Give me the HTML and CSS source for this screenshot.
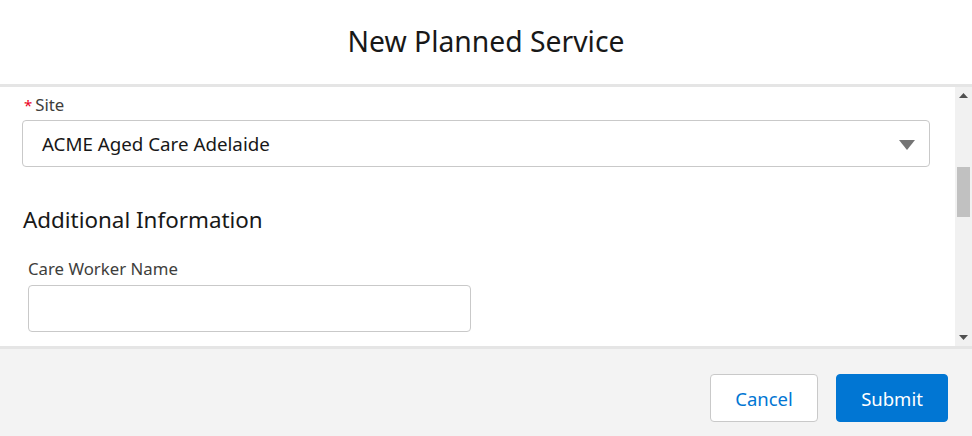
FILE: index.html
```html
<!DOCTYPE html>
<html>
<head>
<meta charset="utf-8">
<link rel="stylesheet" href="styles.css">
</head>
<body>
<div class="modal">
  <header class="header"><h1 class="title">New Planned Service</h1></header>
  <div class="body">
    <div class="content">
      <div class="field">
        <label class="label"><span class="req">*</span>Site</label>
        <div class="select">
          <span class="select-value">ACME Aged Care Adelaide</span>
          <svg class="caret" width="16" height="10" viewBox="0 0 16 10"><path d="M0 0 H16 L8 10 Z" fill="#747474"/></svg>
        </div>
      </div>
      <h2 class="section">Additional Information</h2>
      <div class="field field-inner">
        <label class="label">Care Worker Name</label>
        <div class="input"></div>
      </div>
    </div>
    <div class="scrollbar">
      <div class="sb-arrow"><svg width="9" height="5" viewBox="0 0 9 5"><path d="M0 5 L4.5 0 L9 5 Z" fill="#505050"/></svg></div>
      <div class="sb-track"><div class="sb-thumb"></div></div>
      <div class="sb-arrow"><svg width="9" height="5" viewBox="0 0 9 5"><path d="M0 0 L9 0 L4.5 5 Z" fill="#505050"/></svg></div>
    </div>
  </div>
  <footer class="footer">
    <button class="btn btn-neutral">Cancel</button>
    <button class="btn btn-brand">Submit</button>
  </footer>
</div>
</body>
</html>
```
FILE: styles.css
```css
* { box-sizing: border-box; }
html, body { margin: 0; padding: 0; }
body {
  font-family: "Noto Sans", "Open Sans", sans-serif;
  color: #181818;
  background: #fff;
}
.modal {
  width: 972px;
  height: 436px;
  display: flex;
  flex-direction: column;
}
.header {
  height: 87px;
  flex: none;
  display: flex;
  align-items: center;
  justify-content: center;
  border-bottom: 3px solid #e5e5e5;
  padding-bottom: 2px;
}
.title {
  margin: 0;
  font-size: 28.3px;
  font-weight: 400;
}
.body {
  flex: 1;
  display: flex;
  min-height: 0;
}
.content {
  flex: 1;
  padding: 8px 25px 0 22px;
  overflow: hidden;
}
.field { display: flex; flex-direction: column; }
.label {
  font-size: 16.8px;
  color: #3e3e3c;
  height: 22px;
  line-height: 20px;
  padding-left: 2px;
}
.req { color: #ea001e; margin-right: 3px; font-size: 15px; }
.select {
  height: 47px;
  border: 1px solid #c9c9c9;
  border-radius: 4px;
  display: flex;
  align-items: center;
  justify-content: space-between;
  padding: 0 14px 0 19px;
  margin-top: 3px;
}
.select-value { font-size: 18.75px; color: #181818; }
.caret { margin-top: 2px; }
.section {
  margin: 39px 0 0 1px;
  font-size: 22.4px;
  font-weight: 400;
  line-height: 28px;
}
.field-inner { margin-top: 25px; padding-left: 6px; }
.field-inner .label { padding-left: 0; }
.input {
  width: 443px;
  height: 47px;
  border: 1px solid #c9c9c9;
  border-radius: 4px;
  margin-top: 4px;
}
.scrollbar {
  width: 17px;
  flex: none;
  background: #f1f1f1;
  display: flex;
  flex-direction: column;
}
.sb-arrow {
  height: 17px;
  display: flex;
  align-items: center;
  justify-content: center;
}
.sb-track { flex: 1; padding: 63px 2px 0 2px; }
.sb-thumb { height: 50px; background: #c1c1c1; }
.footer {
  height: 90px;
  flex: none;
  background: #f3f3f3;
  border-top: 3px solid #e5e5e5;
  display: flex;
  justify-content: flex-end;
  align-items: flex-start;
  gap: 18px;
  padding: 25px 24px 0 0;
}
.btn {
  height: 48px;
  border-radius: 4px;
  font-family: inherit;
  font-size: 18.5px;
  padding: 0;
  cursor: pointer;
}
.btn-neutral {
  width: 108px;
  background: #fff;
  border: 1px solid #c9c9c9;
  color: #0176d3;
}
.btn-brand {
  width: 112px;
  background: #0176d3;
  border: 1px solid #0176d3;
  color: #fff;
}
```
